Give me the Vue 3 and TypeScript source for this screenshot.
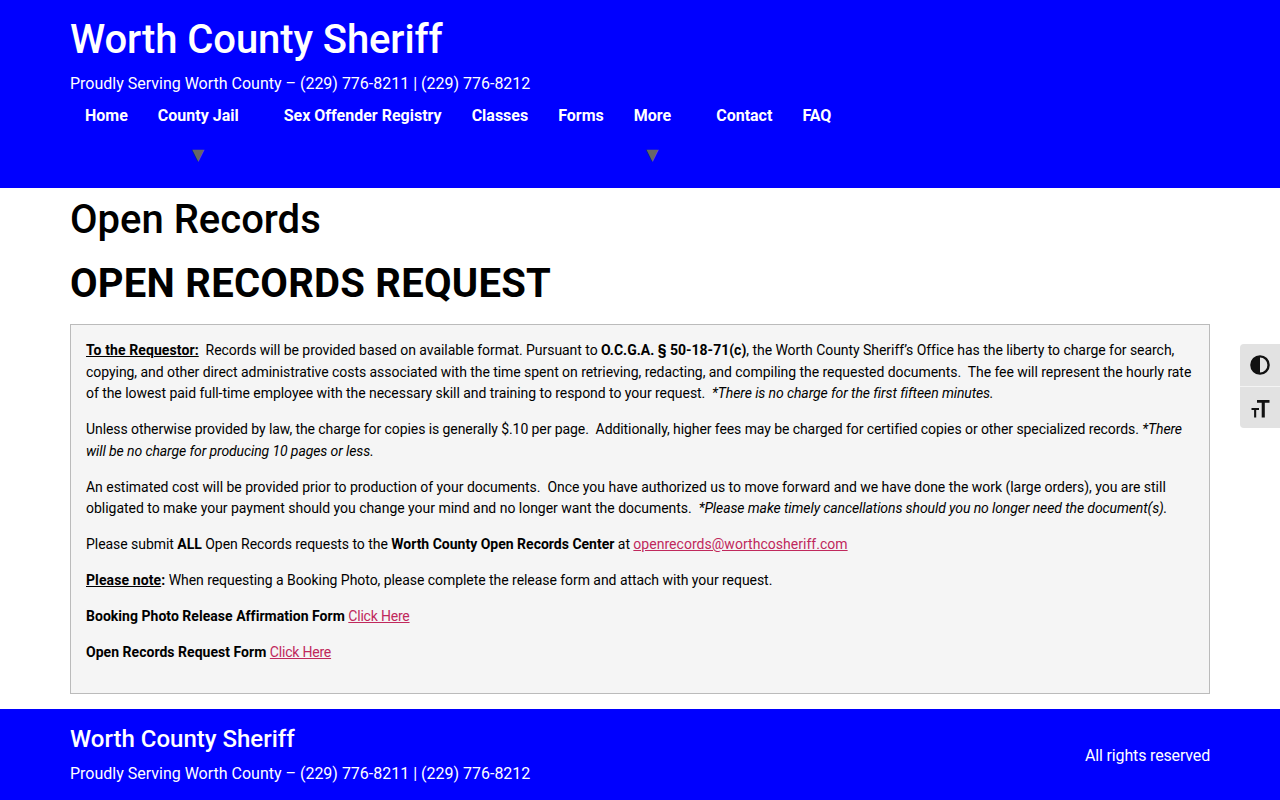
<script setup lang="ts">
interface NavItem { label: string; drop?: boolean }
const nav: NavItem[] = [
  { label: 'Home' },
  { label: 'County Jail', drop: true },
  { label: 'Sex Offender Registry' },
  { label: 'Classes' },
  { label: 'Forms' },
  { label: 'More', drop: true },
  { label: 'Contact' },
  { label: 'FAQ' },
]
const tagline = 'Proudly Serving Worth County – (229) 776-8211 | (229) 776-8212'
</script>

<template>
  <div class="page">
    <header class="head">
      <div class="site-title">Worth County Sheriff</div>
      <div class="tagline">{{ tagline }}</div>
      <nav class="nav">
        <div v-for="n in nav" :key="n.label" class="nav-item" :class="{ drop: n.drop }">
          <div class="nav-inner">
            <a class="nav-link">{{ n.label }}</a>
            <span v-if="n.drop" class="arrow">▼</span>
          </div>
        </div>
      </nav>
    </header>

    <main class="main">
      <h1 class="h1">Open Records</h1>
      <h2 class="h2">OPEN RECORDS REQUEST</h2>
      <section class="box">
        <p class="p1"><strong class="wide"><u>To the Requestor:</u></strong>&nbsp; Records will be provided based on available format. Pursuant to <strong>O.C.G.A. § 50-18-71(c)</strong>, the Worth County Sheriff’s Office has the liberty to charge for search, copying, and other direct administrative costs associated with the time spent on retrieving, redacting, and compiling the requested documents.&nbsp; The fee will represent the hourly rate of the lowest paid full-time employee with the necessary skill and training to respond to your request.&nbsp; <em>*There is no charge for the first fifteen minutes.</em></p>
        <p class="p2">Unless otherwise provided by law, the charge for copies is generally $.10 per page.&nbsp; Additionally, higher fees may be charged for certified copies or other specialized records. <em>*There will be no charge for producing 10 pages or less.</em></p>
        <p class="p3">An estimated cost will be provided prior to production of your documents.&nbsp; Once you have authorized us to move forward and we have done the work (large orders), you are still obligated to make your payment should you change your mind and no longer want the documents.&nbsp; <em>*Please make timely cancellations should you no longer need the document(s).</em></p>
        <p>Please submit <strong>ALL</strong> Open Records requests to the <strong>Worth County Open Records Center</strong> at <a class="link email">openrecords@worthcosheriff.com</a></p>
        <p><strong class="wide"><u>Please note</u>:</strong> When requesting a Booking Photo, please complete the release form and attach with your request.</p>
        <p><strong class="form">Booking Photo Release Affirmation Form</strong> <a class="link">Click Here</a></p>
        <p><strong class="form">Open Records Request Form</strong> <a class="link">Click Here</a></p>
      </section>
    </main>

    <footer class="foot">
      <div>
        <div class="foot-title">Worth County Sheriff</div>
        <div class="tagline foot-tag">{{ tagline }}</div>
      </div>
      <div class="rights">All rights reserved</div>
    </footer>

    <aside class="toolbar">
      <button class="tool" aria-label="Toggle High Contrast">
        <svg viewBox="0 0 20 20" width="20" height="20"><circle cx="10" cy="10" r="8.6" fill="none" stroke="#111" stroke-width="2.4"/><path d="M10 1.4a8.6 8.6 0 0 0 0 17.2z" fill="#111"/></svg>
      </button>
      <button class="tool" aria-label="Toggle Font Size">
        <svg viewBox="0 0 20 20" width="20" height="20"><path d="M7 2H19.5V4.8H14.8V19.5H11.7V4.8H7z M1.5 10H9V12H6.2V19.5H4.1V12H1.5z" fill="#111"/></svg>
      </button>
    </aside>
  </div>
</template>

<style scoped>
.page {
  position: relative;
  font-family: Roboto, "Liberation Sans", sans-serif;
  color: #000;
  min-height: 800px;
  overflow: hidden;
}
.head {
  background: #0000ff;
  color: #fff;
  height: 188px;
  padding: 15px 70px 0;
  box-sizing: border-box;
}
.site-title {
  font-size: 40px;
  font-weight: 500;
  line-height: 50px;
  letter-spacing: -0.1px;
}
.tagline {
  font-size: 16px;
  line-height: 24px;
  letter-spacing: -0.005px;
}
.head .tagline {
  margin-top: 7px;
}
.nav {
  display: flex;
  margin-top: 8px;
}
.nav-item {
  padding: 0 15px;
}
.nav-item.drop {
  padding-right: 30px;
}
.nav-inner {
  display: flex;
  flex-direction: column;
  align-items: center;
}
.nav-link {
  font-size: 16px;
  font-weight: 700;
  line-height: 24px;
  color: #fff;
}
.arrow {
  margin-top: 15px;
  font-family: "DejaVu Sans", sans-serif;
  font-size: 16px;
  line-height: 24px;
  color: #666;
}
.main {
  padding: 0 70px;
}
.h1 {
  margin: 0;
  padding-top: 1px;
  font-size: 40px;
  font-weight: 500;
  line-height: 62px;
}
.h2 {
  margin: 2px 0 0;
  font-size: 40px;
  font-weight: 700;
  line-height: 62px;
  letter-spacing: 0.25px;
}
.box {
  margin-top: 9px;
  border: 1px solid #bbb;
  background: #f5f5f5;
  padding: 15px 15px 19px;
  height: 370px;
  box-sizing: border-box;
  font-size: 14px;
  line-height: 21.6px;
  letter-spacing: -0.05px;
}
.box p {
  margin: 0 0 14.4px;
}
.box .p1 {
  letter-spacing: -0.05px;
}
.box .p2 {
  letter-spacing: -0.08px;
}
.box .p3 {
  letter-spacing: -0.025px;
}
.box strong {
  letter-spacing: 0;
}
.box strong.wide {
  letter-spacing: 0.1px;
}
.box strong.form {
  letter-spacing: 0.03px;
}
.box em {
  letter-spacing: -0.1px;
}
.link {
  color: #c0285c;
  text-decoration: underline;
  letter-spacing: -0.2px;
}
.link.email {
  letter-spacing: 0.03px;
}
.foot {
  margin-top: 15px;
  background: #0000ff;
  color: #fff;
  height: 91px;
  box-sizing: border-box;
  padding: 12px 70px 0;
  display: flex;
  justify-content: space-between;
}
.foot-title {
  font-size: 24px;
  font-weight: 500;
  line-height: 36px;
}
.foot-tag {
  margin-top: 5px;
}
.rights {
  font-size: 16px;
  line-height: 24px;
  margin-top: 23px;
  letter-spacing: -0.16px;
}
.toolbar {
  position: absolute;
  right: 0;
  top: 344px;
  width: 40px;
  display: flex;
  flex-direction: column;
}
.tool {
  width: 40px;
  height: 42px;
  padding: 0;
  border: 0;
  background: #e2e2e2;
  display: flex;
  align-items: center;
  justify-content: center;
}
.tool:first-child {
  border-top-left-radius: 4px;
}
.tool:last-child {
  border-bottom-left-radius: 4px;
}
.tool + .tool {
  border-top: 1px solid #f4f4f4;
}
</style>
